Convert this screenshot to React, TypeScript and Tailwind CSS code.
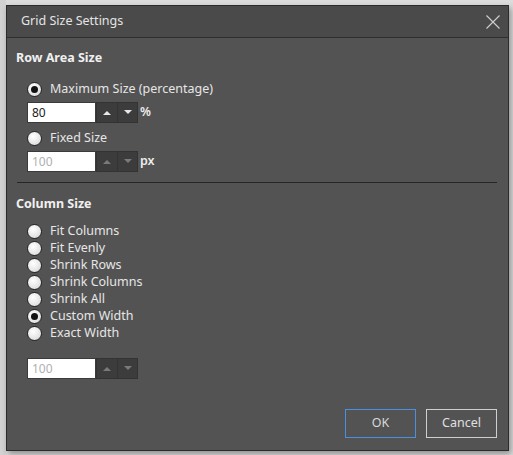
import React from "react";

const font = { fontFamily: '"Noto Sans", "Open Sans", sans-serif' };

function Radio({ checked, label }: { checked?: boolean; label: string }) {
  return (
    <div className="flex items-center h-[17px]">
      <span className="w-[15px] h-[15px] rounded-full border-[1.5px] border-[#262626] bg-[radial-gradient(circle_at_40%_35%,#ffffff,#d4d4d4)] flex items-center justify-center shrink-0">
        {checked && <span className="w-[7px] h-[7px] rounded-full bg-[#111]" />}
      </span>
      <span className="ml-[8px] text-[12.5px] text-[#e6e6e6] leading-none">{label}</span>
    </div>
  );
}

function Spinner({ value, disabled, unit }: { value: string; disabled?: boolean; unit?: string }) {
  const arrow = disabled ? "#7a7a7a" : "#e8e8e8";
  return (
    <div className="flex items-center">
      <div className="flex h-[21px]">
        <div className={`w-[69px] h-[21px] bg-white border border-[#3a3a3a] px-[4px] flex items-center text-[12px] ${disabled ? "text-[#b0b0b0]" : "text-[#222]"}`}>
          {value}
        </div>
        <div className="w-[21px] h-[21px] bg-[#3c3c3c] border-y border-l border-[#333] flex items-center justify-center">
          <svg width="8" height="5" viewBox="0 0 8 5"><path d="M0 5 L4 1 L8 5 Z" fill={arrow} /></svg>
        </div>
        <div className="w-[21px] h-[21px] bg-[#3c3c3c] border border-[#333] flex items-center justify-center">
          <svg width="8" height="5" viewBox="0 0 8 5"><path d="M0 0 L8 0 L4 4 Z" fill={arrow} /></svg>
        </div>
      </div>
      {unit && <span className="ml-[2px] text-[12.5px] font-semibold text-[#ececec]">{unit}</span>}
    </div>
  );
}

export default function App() {
  return (
    <div className="w-[513px] h-[455px] bg-[#dcdcdc] relative overflow-hidden" style={font}>
      <div className="absolute left-0 top-0 w-[6px] h-full bg-[#d2d2d2]" />
      <div className="absolute left-[6px] top-[5px] w-[503px] h-[446px] bg-[#535353] border border-[#2b2b2b] shadow-[2px_3px_6px_rgba(0,0,0,0.35)] flex flex-col">
        <div className="h-[32px] bg-[#4a4a4a] border-b border-[#2e2e2e] flex items-center justify-between pl-[14px] pr-[6px] shrink-0">
          <span className="text-[12.5px] text-[#e4e4e4]">Grid Size Settings</span>
          <svg width="16" height="16" viewBox="0 0 16 16" className="mr-[1px]">
            <path d="M1.5 1.5 L14.5 14.5 M14.5 1.5 L1.5 14.5" stroke="#d0d0d0" strokeWidth="1.1" />
          </svg>
        </div>
        <div className="flex-1 flex flex-col px-[9px] pt-[12px]">
          <div className="text-[12.5px] font-bold text-[#f0f0f0] leading-[16px]">Row Area Size</div>
          <div className="pl-[11px] mt-[15px] flex flex-col">
            <Radio checked label="Maximum Size (percentage)" />
            <div className="mt-[4px]"><Spinner value="80" unit="%" /></div>
            <div className="mt-[7px]"><Radio label="Fixed Size" /></div>
            <div className="mt-[4px]"><Spinner value="100" disabled unit="px" /></div>
          </div>
          <div className="mt-[10px] mx-[1px] h-px bg-[#262626] w-[480px]" />
          <div className="mt-[13px] text-[12.5px] font-bold text-[#f0f0f0] leading-[16px]">Column Size</div>
          <div className="pl-[11px] mt-[11px] flex flex-col">
            <Radio label="Fit Columns" />
            <Radio label="Fit Evenly" />
            <Radio label="Shrink Rows" />
            <Radio label="Shrink Columns" />
            <Radio label="Shrink All" />
            <Radio checked label="Custom Width" />
            <Radio label="Exact Width" />
            <div className="mt-[16px]"><Spinner value="100" disabled /></div>
          </div>
          <div className="flex-1" />
          <div className="flex justify-end gap-[10px] pb-[12px] pr-[2px]">
            <button className="w-[71px] h-[29px] border border-[#4a8fe0] text-[12.5px] text-[#d8d8d8]">OK</button>
            <button className="w-[71px] h-[29px] border border-[#cfcfcf] text-[12.5px] text-[#e0e0e0]">Cancel</button>
          </div>
        </div>
      </div>
    </div>
  );
}
